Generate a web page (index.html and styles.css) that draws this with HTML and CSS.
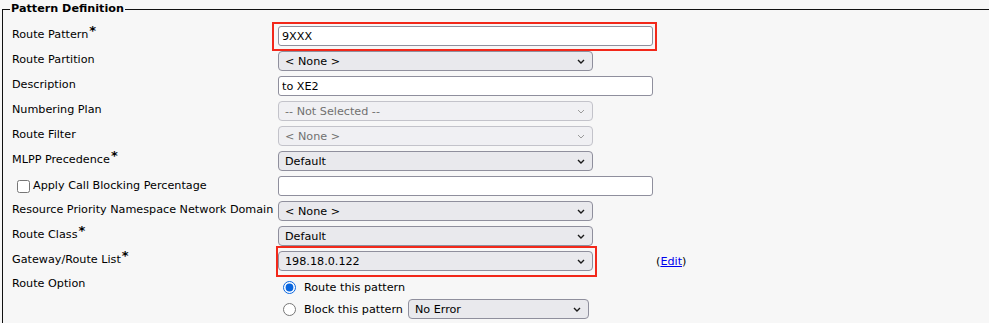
FILE: index.html
```html
<!DOCTYPE html>
<html lang="en">
<head>
  <meta charset="UTF-8">
  <meta name="viewport" content="width=device-width, initial-scale=1.0">
  <title>Route Pattern Configuration</title>
  <link rel="stylesheet" href="styles.css">
</head>
<body>
  <fieldset class="group">
    <legend>Pattern Definition</legend>
    <div class="rows">
      <div class="row">
        <label class="lbl" for="pattern">Route Pattern<sup>*</sup></label>
        <div class="ctl">
          <span class="mark mark-pattern"><input class="text" type="text" id="pattern" value="9XXX"></span>
        </div>
      </div>
      <div class="row">
        <label class="lbl">Route Partition</label>
        <div class="ctl">
          <div class="select"><span>&lt; None &gt;</span><svg class="chev" width="8" height="5" viewBox="0 0 8 5"><path d="M1 1 L4 4 L7 1" /></svg></div>
        </div>
      </div>
      <div class="row">
        <label class="lbl" for="desc">Description</label>
        <div class="ctl"><input class="text" type="text" id="desc" value="to XE2"></div>
      </div>
      <div class="row">
        <label class="lbl">Numbering Plan</label>
        <div class="ctl">
          <div class="select disabled"><span>-- Not Selected --</span><svg class="chev" width="8" height="5" viewBox="0 0 8 5"><path d="M1 1 L4 4 L7 1" /></svg></div>
        </div>
      </div>
      <div class="row">
        <label class="lbl">Route Filter</label>
        <div class="ctl">
          <div class="select disabled"><span>&lt; None &gt;</span><svg class="chev" width="8" height="5" viewBox="0 0 8 5"><path d="M1 1 L4 4 L7 1" /></svg></div>
        </div>
      </div>
      <div class="row">
        <label class="lbl">MLPP Precedence<sup>*</sup></label>
        <div class="ctl">
          <div class="select"><span>Default</span><svg class="chev" width="8" height="5" viewBox="0 0 8 5"><path d="M1 1 L4 4 L7 1" /></svg></div>
        </div>
      </div>
      <div class="row">
        <label class="lbl check"><input type="checkbox" class="box">Apply Call Blocking Percentage</label>
        <div class="ctl"><input class="text" type="text" value=""></div>
      </div>
      <div class="row">
        <label class="lbl">Resource Priority Namespace Network Domain</label>
        <div class="ctl">
          <div class="select"><span>&lt; None &gt;</span><svg class="chev" width="8" height="5" viewBox="0 0 8 5"><path d="M1 1 L4 4 L7 1" /></svg></div>
        </div>
      </div>
      <div class="row">
        <label class="lbl">Route Class<sup>*</sup></label>
        <div class="ctl">
          <div class="select"><span>Default</span><svg class="chev" width="8" height="5" viewBox="0 0 8 5"><path d="M1 1 L4 4 L7 1" /></svg></div>
        </div>
      </div>
      <div class="row">
        <label class="lbl">Gateway/Route List<sup>*</sup></label>
        <div class="ctl">
          <span class="mark mark-gateway"><div class="select"><span>198.18.0.122</span><svg class="chev" width="8" height="5" viewBox="0 0 8 5"><path d="M1 1 L4 4 L7 1" /></svg></div></span>
          <span class="edit">(<a href="#">Edit</a>)</span>
        </div>
      </div>
      <div class="row option">
        <label class="lbl">Route Option</label>
        <div class="radios">
          <label class="choice"><input type="radio" name="opt" checked>Route this pattern</label>
          <label class="choice"><input type="radio" name="opt">Block this pattern
            <div class="select small"><span>No Error</span><svg class="chev" width="8" height="5" viewBox="0 0 8 5"><path d="M1 1 L4 4 L7 1" /></svg></div>
          </label>
        </div>
      </div>
    </div>
  </fieldset>
</body>
</html>
```

FILE: styles.css
```css
* {
  box-sizing: border-box;
}

body {
  margin: 0;
  background-color: #f7f7f7;
  font-family: "DejaVu Sans", Verdana, sans-serif;
  font-size: 11.2px;
  color: #000;
  overflow: hidden;
}

.group {
  margin: 0 0 0 2px;
  width: calc(100vw - 2px);
  height: 100vh;
  border: 1px solid #111;
  border-right: none;
  border-bottom: none;
  padding: 8px 0 0 9px;
}

.group legend {
  font-weight: bold;
  line-height: 18px;
  padding: 0 1px;
  margin-left: -2px;
}

.rows {
  display: flex;
  flex-direction: column;
}

.row {
  display: grid;
  grid-template-columns: 266px auto;
  height: 25px;
}

.lbl {
  line-height: 16px;
  padding-top: 1px;
  white-space: nowrap;
}

.lbl sup {
  font-size: 13px;
  font-weight: bold;
  line-height: 0;
  vertical-align: -2px;
  position: relative;
  top: -5px;
  margin-left: 1px;
}

.check {
  display: flex;
  align-items: center;
  height: 20px;
  padding-top: 0;
}

.box {
  width: 13px;
  height: 13px;
  margin: 0 3px 0 5px;
}

.ctl {
  display: flex;
  align-items: center;
  height: 20px;
}

.text {
  width: 375px;
  height: 20px;
  border: 1px solid #8f8f9d;
  border-radius: 3px;
  background: #fff;
  font-family: inherit;
  font-size: 11.2px;
  padding: 0 3px;
  color: #000;
  outline: none;
}

.select {
  display: flex;
  align-items: center;
  justify-content: space-between;
  width: 315px;
  height: 20px;
  border: 1px solid #8f8f9d;
  border-radius: 4px;
  background: #e9e9ed;
  padding: 0 7px 0 6px;
}

.chev path {
  fill: none;
  stroke: #1a1a1a;
  stroke-width: 1.4;
}

.select.disabled {
  background: #f0f0f3;
  border-color: #c3c3ca;
  color: #707070;
}

.select.disabled .chev path {
  stroke: #9a9a9a;
  stroke-width: 1;
}

.mark {
  position: relative;
  display: inline-block;
}

.mark::after {
  content: "";
  position: absolute;
  border: 2px solid #f2281a;
}

.mark-pattern::after {
  top: -4px;
  left: -6px;
  right: -4px;
  bottom: -5px;
}

.mark-gateway::after {
  top: -5px;
  left: -2px;
  right: -4px;
  bottom: -6px;
}

.edit {
  margin-left: 63px;
}

.edit a {
  color: #0000ee;
}

.row.option {
  height: auto;
}

.option .lbl {
  padding-top: 0;
  line-height: 15px;
}

.radios {
  display: flex;
  flex-direction: column;
}

.choice {
  display: flex;
  align-items: center;
  height: 22px;
  white-space: nowrap;
}

.choice input {
  width: 13px;
  height: 13px;
  margin: 0 8px 0 5px;
  accent-color: #0a66de;
}

.select.small {
  width: 181px;
  margin-left: 5px;
}
```
